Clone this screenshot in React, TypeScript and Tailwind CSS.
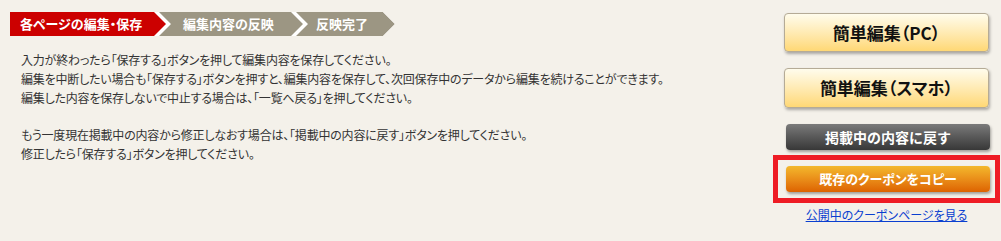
import React from "react";

const jp = "font-['Noto_Sans_CJK_JP','Noto_Sans',sans-serif]";

const steps = [
  { label: "各ページの編集・保存", width: "w-[156px]", pad: "pl-[10px]", color: "bg-[#cc0000]", first: true },
  { label: "編集内容の反映", width: "w-[144px]", pad: "pl-[24px]", color: "bg-[#9c9683]", first: false },
  { label: "反映完了", width: "w-[99px]", pad: "pl-[20px]", color: "bg-[#9c9683]", first: false },
];

function StepBar() {
  return (
    <div className="flex h-6 w-fit bg-white [clip-path:polygon(0_0,calc(100%-12px)_0,100%_50%,calc(100%-12px)_100%,0_100%)]">
      {steps.map((step) => (
        <div
          key={step.label}
          className={`${step.width} ${step.pad} ${step.color} ${
            step.first
              ? "[clip-path:polygon(0_0,calc(100%-12px)_0,100%_50%,calc(100%-12px)_100%,0_100%)]"
              : "-ml-[7px] [clip-path:polygon(0_0,calc(100%-12px)_0,100%_50%,calc(100%-12px)_100%,0_100%,12px_50%)]"
          } h-6 shrink-0 whitespace-nowrap text-[13px] font-bold leading-6 text-white [font-feature-settings:'palt']`}
        >
          {step.label}
        </div>
      ))}
    </div>
  );
}

export default function App() {
  return (
    <div className={`flex h-[241px] w-[1001px] bg-[#f4f1ea] ${jp}`}>
      <div className="flex-1 pl-[10px] pt-[12px]">
        <StepBar />
        <div className="pl-[11px] text-[12px] leading-[19px] tracking-[-0.2px] text-[#333333] [font-feature-settings:'palt']">
          <p className="mt-[14px]">
            入力が終わったら「保存する」ボタンを押して編集内容を保存してください。
            <br />
            編集を中断したい場合も「保存する」ボタンを押すと、編集内容を保存して、次回保存中のデータから編集を続けることができます。
            <br />
            編集した内容を保存しないで中止する場合は、「一覧へ戻る」を押してください。
          </p>
          <p className="mt-[18px]">
            もう一度現在掲載中の内容から修正しなおす場合は、「掲載中の内容に戻す」ボタンを押してください。
            <br />
            修正したら「保存する」ボタンを押してください。
          </p>
        </div>
      </div>

      <div className="flex w-[228px] flex-col pt-[13px]">
        <button className="ml-[11px] h-[39px] w-[205px] rounded-[4px] border border-[#b5ab96] bg-gradient-to-b from-[#fffcec] to-[#ffd874] text-[17px] font-bold text-[#111111] shadow-[1px_2px_3px_rgba(0,0,0,0.3)] [font-feature-settings:'palt']">
          簡単編集（PC）
        </button>
        <button className="mt-[16px] ml-[11px] h-[40px] w-[205px] rounded-[4px] border border-[#b5ab96] bg-gradient-to-b from-[#fffcec] to-[#ffd874] text-[17px] font-bold text-[#111111] shadow-[1px_2px_3px_rgba(0,0,0,0.3)] [font-feature-settings:'palt']">
          簡単編集（スマホ）
        </button>
        <button className="mt-[16px] ml-[13px] h-[26px] w-[204px] rounded-[4px] bg-gradient-to-b from-[#7b7b7b] to-[#383838] text-[14px] font-bold text-white shadow-[1px_2px_3px_rgba(0,0,0,0.35)]">
          掲載中の内容に戻す
        </button>
        <div className="mt-[5px] w-[227px] border-[5px] border-[#ee1c25] pt-[5px] pr-[5px] pb-[6px] pl-[8px]">
          <button className="h-[26px] w-[204px] rounded-[4px] bg-gradient-to-b from-[#f3b82c] to-[#dd6200] text-[13px] font-bold text-white shadow-[1px_2px_3px_rgba(0,0,0,0.35)] [font-feature-settings:'palt']">
            既存のクーポンをコピー
          </button>
        </div>
        <div className="mt-[3px] w-[227px] text-center text-[12px] leading-[18px] [font-feature-settings:'palt']">
          <a href="#" className="text-[#0a3fd0] underline">
            公開中のクーポンページを見る
          </a>
        </div>
      </div>
    </div>
  );
}
